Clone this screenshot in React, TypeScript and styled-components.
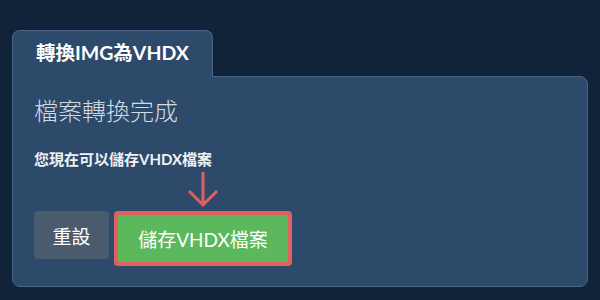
import * as React from 'react'
import styled, { createGlobalStyle } from 'styled-components'

const GlobalStyle = createGlobalStyle`
  html, body {
    margin: 0;
    padding: 0;
    background: #112339;
    font-family: Lato, "Noto Sans CJK TC", "Noto Sans", sans-serif;
  }
`

const Root = styled.div`
  width: 600px;
  height: 300px;
  box-sizing: border-box;
  padding: 30px 12px 0 12px;
  background: #112339;
`

const Tab = styled.div`
  position: relative;
  z-index: 1;
  width: 201px;
  height: 47px;
  box-sizing: border-box;
  margin-bottom: -1px;
  padding: 9px 0 0 23px;
  background: #2d4a6a;
  border: 1px solid #4a6686;
  border-bottom: none;
  border-radius: 8px 8px 0 0;
  color: #ffffff;
  font-size: 19.5px;
  font-weight: 700;
  line-height: 26px;
`

const Panel = styled.div`
  width: 576px;
  height: 211px;
  box-sizing: border-box;
  padding: 18px 20px 0 21px;
  background: #2d4a6a;
  border: 1px solid #4a6686;
  border-radius: 0 8px 8px 8px;
`

const Heading = styled.div`
  color: #d2dae4;
  font-size: 24px;
  font-weight: 300;
  line-height: 32px;
`

const Message = styled.div`
  margin-top: 22px;
  color: #eef2f6;
  font-size: 15px;
  font-weight: 700;
  line-height: 20px;
`

const Actions = styled.div`
  display: flex;
  align-items: flex-start;
  gap: 5px;
  margin-top: 42px;
`

const Button = styled.button<{ $variant: 'reset' | 'save' }>`
  box-sizing: border-box;
  height: 48px;
  padding: 0 18.5px;
  border: none;
  border-radius: 4px;
  color: #ffffff;
  font-family: inherit;
  font-size: 19px;
  font-weight: 400;
  background: ${p => (p.$variant === 'save' ? '#5cb85c' : '#4b5b6e')};
`

const Highlight = styled.div`
  position: relative;
  padding: 4px;
  border-radius: 4px;
  background: #e06060;
`

const SaveButton = styled(Button)`
  width: 170px;
  height: 47px;
  padding: 0;
  border-radius: 1px;
`

const Arrow = styled.svg`
  position: absolute;
  left: 50%;
  bottom: 100%;
  margin-left: -16px;
  margin-bottom: 3px;
`

export default function App() {
  return (
    <Root>
      <GlobalStyle />
      <Tab>轉換IMG為VHDX</Tab>
      <Panel>
        <Heading>檔案轉換完成</Heading>
        <Message>您現在可以儲存VHDX檔案</Message>
        <Actions>
          <Button $variant="reset">重設</Button>
          <Highlight>
            <Arrow width="32" height="37" viewBox="0 0 32 37">
              <path
                d="M16 1 V34 M2 20 L16 34 L30 20"
                stroke="#e06060"
                strokeWidth="3"
                fill="none"
              />
            </Arrow>
            <SaveButton $variant="save">儲存VHDX檔案</SaveButton>
          </Highlight>
        </Actions>
      </Panel>
    </Root>
  )
}
